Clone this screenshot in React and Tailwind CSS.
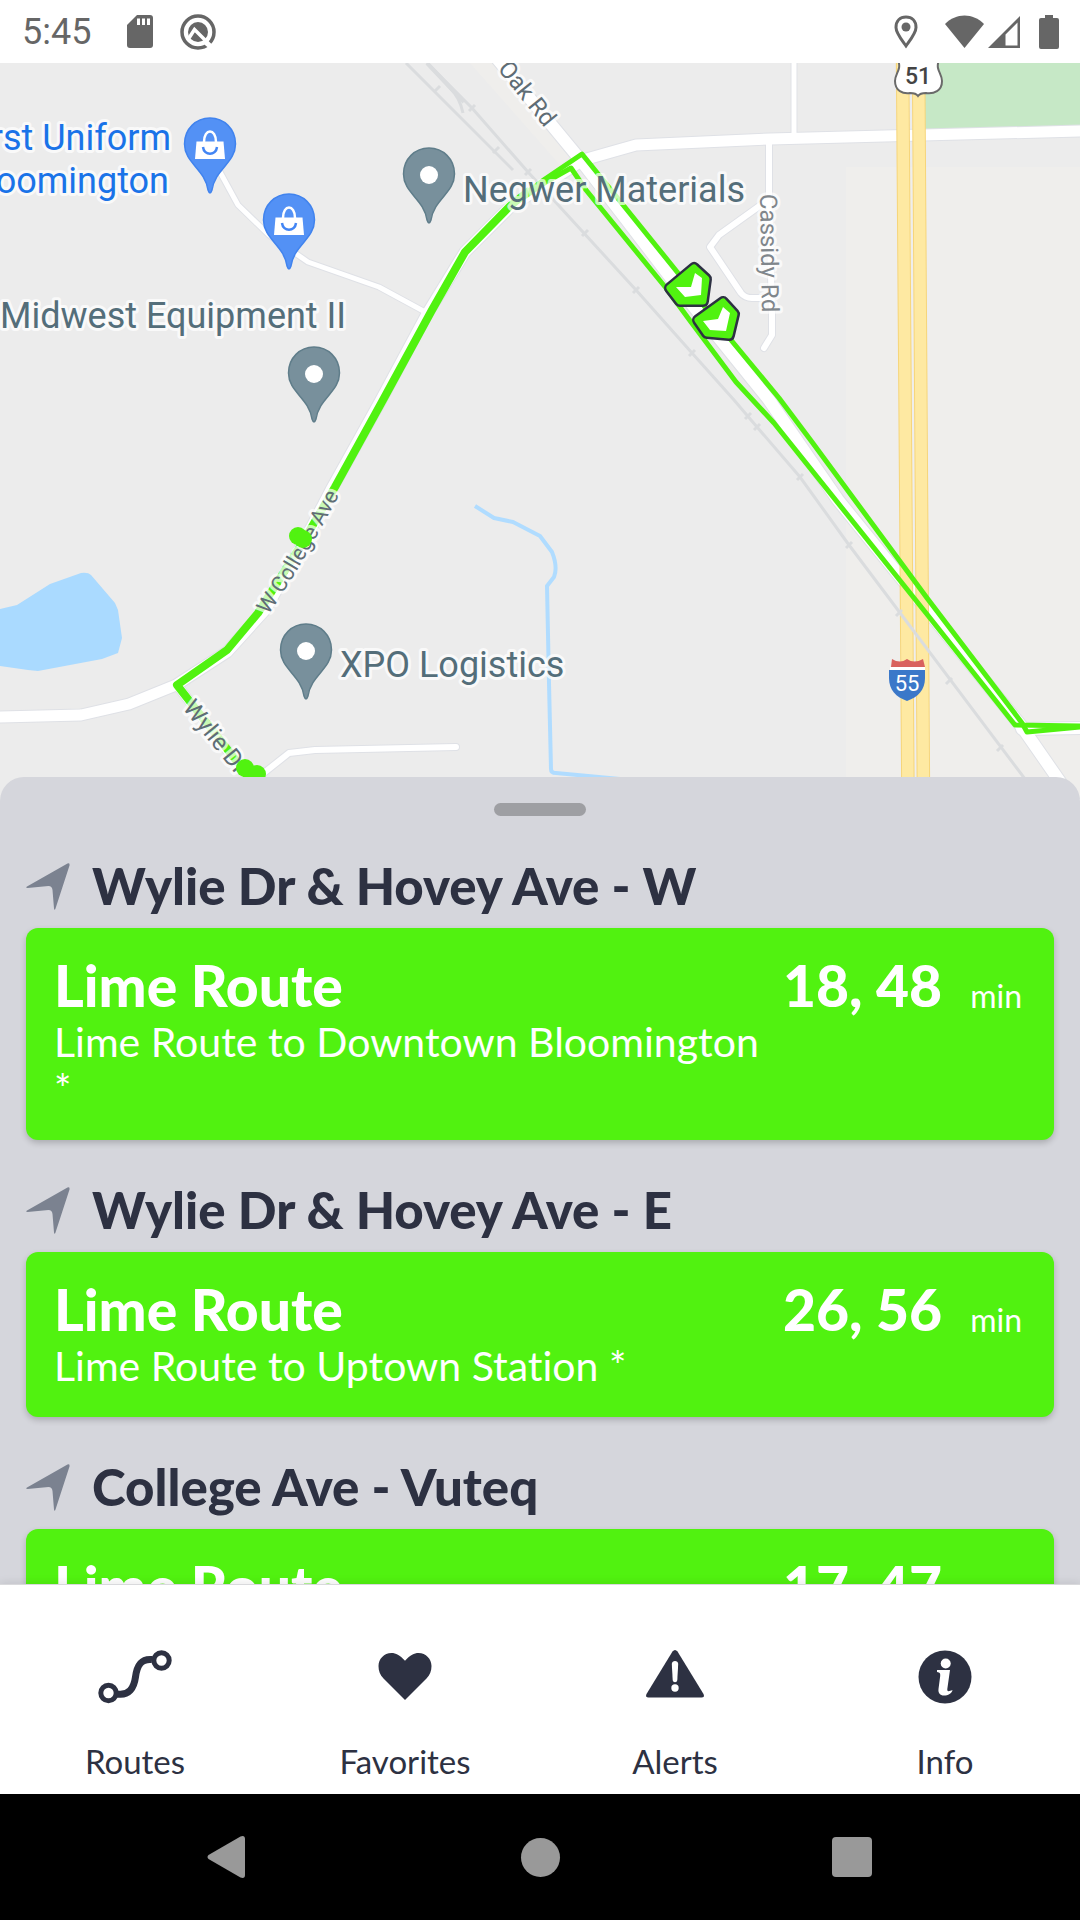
// Transit tracker home screen: live map, nearby arrivals sheet, tab bar

const LIME = '#51f210'
const INK = '#2d3142'

const stops = [
  {
    name: 'Wylie Dr & Hovey Ave - W',
    arrivals: [{ route: 'Lime Route', headsign: 'Lime Route to Downtown Bloomington *', times: '18, 48' }],
  },
  {
    name: 'Wylie Dr & Hovey Ave - E',
    arrivals: [{ route: 'Lime Route', headsign: 'Lime Route to Uptown Station *', times: '26, 56' }],
  },
  {
    name: 'College Ave - Vuteq',
    arrivals: [{ route: 'Lime Route', headsign: 'Lime Route to Uptown Station *', times: '17, 47' }],
  },
]

const tabs = [
  { label: 'Routes', icon: RoutesIcon },
  { label: 'Favorites', icon: HeartIcon },
  { label: 'Alerts', icon: AlertIcon },
  { label: 'Info', icon: InfoIcon },
]

// ── Map data ────────────────────────────────────────────────

const roads = [
  { d: 'M794 50V138', w: 5 },
  { d: 'M769 140V196L772 313V335L764 348', w: 6 },
  { d: 'M765 202L719 235L710 247L741 293Q745 298 752 298H766', w: 6 },
  { d: 'M220 172L238 205L269 235L308 262L379 287L427 313', w: 5 },
  { d: 'M255 780L289 753L315 750L456 747', w: 6 },
  { d: 'M177 685L250 780', w: 9 },
  { d: 'M0 717L81 715L129 704L176 685L227 652L265 610L305 540L331 490L381 400L427 314L465 252L510 207L583 160L636 145L770 139L1080 131', w: 11 },
  { d: 'M490 50L550 123L583 163L678 287L769 400L838 500L1022 727L1090 825', w: 12 },
  { d: 'M1022 729L1080 728', w: 12 },
]

const railTicks = [
  [437, 89], [472, 108], [496, 150], [528, 172], [585, 233], [636, 290], [692, 353],
  [748, 416], [757, 427], [800, 477], [849, 545], [899, 613], [949, 681], [1000, 748],
]

const pins = [
  { x: 210, y: 117, shop: true },
  { x: 289, y: 193, shop: true },
  { x: 429, y: 147 },
  { x: 314, y: 346 },
  { x: 306, y: 623 },
]

const buses = [
  {
    body: '694,268 706,279 703,301 680,301 670,288',
    arrow: '695,273 702,278 701,295 685,297 676,287 691,287',
  },
  {
    body: '723,302 734,314 729,335 707,333 698,320',
    arrow: '723,307 730,313 726,331 710,330 703,321 718,319',
  },
]

function Pin({ x, y, shop }) {
  return (
    <g transform={`translate(${x} ${y})`}>
      <path
        d="M0 1C14 1 25.500 12 25.500 27C25.500 46 5 52 2 73Q0 79 -2 73C-5 52 -25.500 46 -25.500 27C-25.500 12 -14 1 0 1Z"
        fill={shop ? '#5391f5' : '#78909c'}
        stroke={shop ? '#4083ee' : '#5f7d8a'}
        strokeWidth="1.500"
      />
      {shop ? (
        <g fill="none">
          <path d="M-13.500 24.500H13.500L15 42H-15Z" fill="#fff" />
          <path d="M-6 25C-6 11 6 11 6 25" stroke="#fff" strokeWidth="2.500" />
          <path d="M-7 30C-6 39 6 39 7 30" stroke="#4285f4" strokeWidth="2.500" />
        </g>
      ) : (
        <circle cy="28" r="9" fill="#fff" />
      )}
    </g>
  )
}

function TransitMap() {
  return (
    <svg
      viewBox="0 63 1080 738"
      preserveAspectRatio="xMidYMin slice"
      className="block h-full w-full font-[Roboto,sans-serif]"
      role="img"
      aria-label="Map of nearby routes"
    >
      <rect y="63" width="1080" height="738" fill="#ececec" />
      <path d="M846 167H1080V801H846Z M470 63H500L572 155L560 165Z" fill="#efeeec" />
      <path d="M924 63H1080V131H924Z" fill="#c6e8c6" />
      <path
        d="M0 609L17 605L50 584L81 573Q88 572 91 575L115 603L118 610L122 638L118 653L102 659L38 671L28 670L0 666Z"
        fill="#aadaff"
      />
      <path
        d="M475 506L494 518L513 522L540 536L552 552Q558 567 554 577L547 586L549 683L551 769Q551 773 556 773L620 779"
        fill="none"
        stroke="#b0dcff"
        strokeWidth="4"
        strokeLinejoin="round"
      />

      {/* roads: casing first, then surface */}
      <g fill="none" strokeLinejoin="round" strokeLinecap="round">
        {roads.map(r => <path key={r.d} d={r.d} stroke="#dfe1e6" strokeWidth={r.w + 2} />)}
        {roads.map(r => <path key={r.d} d={r.d} stroke="#fff" strokeWidth={r.w} />)}
      </g>

      {/* interstate */}
      <g fill="none">
        <path d="M902.500 50L908 801M918.500 50L923.500 801" stroke="#f6d57a" strokeWidth="13.500" />
        <path d="M902.500 50L908 801M918.500 50L923.500 801" stroke="#fee9a2" strokeWidth="11.500" />
      </g>

      {/* railway */}
      <g fill="none" stroke="#dadcde" strokeWidth="3">
        <path d="M406 63L513 170" />
        <path d="M427 63L450 88Q460 98 463 113M427 63L472 108L528 172L636 290L692 353L734 400L757 427L800 477L849 545L1040 799" />
        <path d="M427 63L464 102" strokeWidth="4" />
        {railTicks.map(([x, y]) => <path key={x} d={`M${x - 3} ${y + 3}L${x + 3} ${y - 3}`} />)}
      </g>

      {pins.map(p => <Pin key={`${p.x}-${p.y}`} {...p} />)}

      {/* route line */}
      <g fill="none" stroke={LIME} strokeLinejoin="round">
        <path d="M250 780L238 763L177 685L227 650L258 613L303 542L335 487L383 400L432 310L465 252L510 206L530 190" strokeWidth="8" />
        <path d="M510 205L545 179L582 154L678 273L731 340L779 398L812 442L927 598L1022 723L1027 732L1080 727" strokeWidth="5" />
        <path d="M520 200L546 182L571 168L586 190L666 288L691 322L736 382L774 423L926 613L1015 725L1080 726" strokeWidth="5" />
      </g>

      {/* labels */}
      <defs>
        <path id="college-ave" d="M268 615Q300 570 346 482" />
      </defs>
      <g fill="#546e7a" stroke="#fff" strokeOpacity="0.7" strokeWidth="6" strokeLinejoin="round" paintOrder="stroke" fontSize="36">
        <text x="171" y="150" textAnchor="end" fill="#1a73e8">First Uniform</text>
        <text x="169" y="193" textAnchor="end" fill="#1a73e8">Bloomington</text>
        <text x="0" y="328">Midwest Equipment II</text>
        <text x="463" y="202">Negwer Materials</text>
        <text x="340" y="677">XPO Logistics</text>
        <g fontSize="24" fill="#5f6d75">
          <text transform="translate(497 69) rotate(51)">Oak Rd</text>
          <text transform="translate(182 708) rotate(51)">Wylie Dr</text>
          <text fontSize="22"><textPath href="#college-ave">W College Ave</textPath></text>
          <text transform="translate(760 194) rotate(89)" fill="#80868b">Cassidy Rd</text>
        </g>
      </g>

      {/* stops */}
      <g fill={LIME}>
        <circle cx="298" cy="536" r="9" />
        <circle cx="303" cy="539" r="9" />
        <circle cx="245" cy="768" r="9" />
        <circle cx="257" cy="774" r="9" />
      </g>

      {/* buses */}
      {buses.map(b => (
        <g key={b.body} strokeLinejoin="round">
          <polygon points={b.body} fill={INK} stroke={INK} strokeWidth="12" />
          <polygon points={b.body} fill={LIME} stroke={LIME} strokeWidth="7" />
          <polygon points={b.arrow} fill="#fff" />
        </g>
      ))}

      {/* highway shields */}
      <path
        d="M898 60C902 70 895 73 895 81C895 91 903 94 910 93Q916 93 918 96Q920 93 926 93C934 94 942 91 942 81C942 73 935 70 939 60Z"
        fill="#fff"
        stroke="#6a6a6a"
        strokeWidth="2"
      />
      <text x="918" y="84" textAnchor="middle" fontSize="23" fontWeight="500" fill="#444">51</text>
      <path d="M891 667L892 659Q900 664 907 659Q914 664 923 659L925 667Z" fill="#d9625e" />
      <path d="M890 667H925V670H890Z" fill="#fff" />
      <path d="M889 670H925V678C925 690 918 697 907 701C896 697 889 690 889 678Z" fill="#3b78c9" />
      <text x="907" y="691" textAnchor="middle" fontSize="22" fill="#fff">55</text>
    </svg>
  )
}

// ── Icons ───────────────────────────────────────────────────

function RoutesIcon() {
  return (
    <svg viewBox="0 0 80 60" className="h-[60px] w-20" fill="none" stroke="currentColor" aria-hidden="true">
      <path d="M22 47C34 49 39 41 40.500 30C42 18 46 11.500 57 12.500" strokeWidth="7" />
      <circle cx="13.500" cy="46" r="7.700" strokeWidth="5" />
      <circle cx="66.500" cy="13.500" r="7.700" strokeWidth="5" />
    </svg>
  )
}

function HeartIcon() {
  return (
    <svg viewBox="0 0 60 60" className="size-[60px]" fill="currentColor" aria-hidden="true">
      <path d="M30 53L8.500 31.500C5 28 3.500 24 3.500 19C3.500 12 9 6 16.500 6C21 6 24.500 8 30 13.700C35.500 8 39 6 43.500 6C51 6 56.500 12 56.500 19C56.500 24 55 28 51.500 31.500Z" />
    </svg>
  )
}

function AlertIcon() {
  return (
    <svg viewBox="0 0 60 60" className="size-[60px]" fill="currentColor" aria-hidden="true">
      <path d="M27.500 4.500Q30 1.500 32.500 4.500L58.500 47Q60 50.500 56.500 50.500H3.500Q0 50.500 1.500 47Z" />
      <path d="M26.800 17C26.800 13 33.200 13 33.200 17L32.300 33C32 36 28 36 27.700 33Z" fill="#fff" />
      <circle cx="30" cy="41" r="3.700" fill="#fff" />
    </svg>
  )
}

function InfoIcon() {
  return (
    <svg viewBox="0 0 60 60" className="size-[60px]" fill="currentColor" aria-hidden="true">
      <circle cx="30" cy="30" r="26.500" />
      <g fill="#fff">
        <circle cx="30.700" cy="16.500" r="5" />
        <path d="M22 23H35L32.300 42C32 45 34 44.500 37.500 43C37 46.500 33 48.500 29 48.500C25 48.500 23 46 23.500 42L25.200 29C25.500 26.500 25 25.500 22 25Z" />
      </g>
    </svg>
  )
}

function DirectionIcon() {
  return (
    <svg viewBox="0 0 44 47" className="h-[47px] w-11 shrink-0" fill="#7b8290" aria-hidden="true">
      <path d="M41.500 0.500Q44 -0.300 43.500 2.500L29.500 45.500Q28.500 48 28 45.500L26.500 27Q26 23 22.500 23L1.500 25Q-0.800 24.500 1 23.500Z" />
    </svg>
  )
}

// ── Screen parts ────────────────────────────────────────────

function StatusBar() {
  return (
    <header className="flex h-[63px] shrink-0 items-center bg-white pr-5 pl-[22px] font-[Roboto,sans-serif] text-[#666]">
      <span className="text-4xl">5:45</span>
      <svg viewBox="0 0 26 33" className="ml-9 h-[33px] w-[26px]" fill="currentColor" aria-hidden="true">
        <path d="M10 0H23Q26 0 26 3V30Q26 33 23 33H3Q0 33 0 30V10Z" />
        <path d="M10 3.500H13V10H10ZM15 3.500H18V10H15ZM20 3.500H23V10H20Z" fill="#fff" />
      </svg>
      <svg viewBox="0 0 36 36" className="ml-[27px] size-9" fill="none" stroke="currentColor" aria-hidden="true">
        <circle cx="18" cy="18" r="16" strokeWidth="3.500" />
        <circle cx="18" cy="18" r="10" fill="currentColor" stroke="none" />
        <path d="M9 24L14.500 15.500L31 32" stroke="#fff" strokeWidth="3.500" />
        <path d="M25 29L31 34" stroke="#fff" strokeWidth="3" />
      </svg>

      <svg viewBox="0 0 24 34" className="ml-auto h-[34px] w-6" fill="none" stroke="currentColor" aria-hidden="true">
        <path d="M12 31C7 24 2 18 2 12.500C2 6 6 2 12 2C18 2 22 6 22 12.500C22 18 17 24 12 31Z" strokeWidth="3" />
        <circle cx="12" cy="12" r="4.500" fill="currentColor" stroke="none" />
      </svg>
      <svg viewBox="0 0 39 33" className="ml-[27px] h-[33px] w-[39px]" fill="currentColor" aria-hidden="true">
        <path d="M0 9C11 -2.500 28 -2.500 39 9L19.500 33Z" />
      </svg>
      <svg viewBox="0 0 32 32" className="ml-1 size-8" fill="currentColor" aria-hidden="true">
        <path d="M32 0V32H0ZM29.500 6.500L17.500 18.500V29.500H29.500Z" fillRule="evenodd" />
      </svg>
      <svg viewBox="0 0 20 34" className="mr-px ml-[19px] h-[34px] w-5" fill="currentColor" aria-hidden="true">
        <path d="M6 0H14V3H18Q20 3 20 5V32Q20 34 18 34H2Q0 34 0 32V5Q0 3 2 3H6Z" />
      </svg>
    </header>
  )
}

function ArrivalCard({ route, headsign, times }) {
  return (
    <button
      type="button"
      className="flex w-full items-start rounded-xl bg-[#51f210] pt-6 pr-8 pb-7 pl-7 text-left text-white shadow-[0_3px_6px_rgba(0,0,0,0.2)]"
    >
      <span className="min-w-0 flex-1">
        <span className="block text-[57px] leading-[66px] font-black">{route}</span>
        <span className="block text-[41px] leading-[47px]">{headsign}</span>
      </span>
      <span className="ml-4 flex shrink-0 items-end gap-7">
        <span className="text-[57px] leading-[66px] font-black">{times}</span>
        <span className="text-[32px] leading-[44px]">min</span>
      </span>
    </button>
  )
}

function StopSection({ stop }) {
  return (
    <section className="pt-[46px]">
      <div className="mb-[18px] flex h-12 items-center gap-[22px]">
        <DirectionIcon />
        <h2 className="text-[51px] leading-[48px] font-black text-[#2d3142]">{stop.name}</h2>
      </div>
      {stop.arrivals.map(a => <ArrivalCard key={a.headsign} {...a} />)}
    </section>
  )
}

function TabBar() {
  return (
    <nav className="relative grid h-[210px] shrink-0 grid-cols-4 border-t border-[#d9d9dc] bg-white shadow-[0_-2px_8px_rgba(0,0,0,0.08)]">
      {tabs.map(({ label, icon: Icon }) => (
        <button key={label} type="button" className="flex flex-col items-center pt-[62px] text-[#2d3142]">
          <Icon />
          <span className="mt-[34px] text-[33px] leading-10">{label}</span>
        </button>
      ))}
    </nav>
  )
}

function SystemNav() {
  return (
    <div className="grid h-[126px] shrink-0 grid-cols-3 bg-black px-[72px]">
      <button type="button" aria-label="Back" className="flex items-center justify-center">
        <svg viewBox="0 0 38 42" className="mr-1 h-[42px] w-[38px]" fill="#999" aria-hidden="true">
          <path d="M33.500 0.500Q38 -1 38 3V39Q38 43 33.500 41.500L1.500 23Q-0.500 21 1.500 19Z" />
        </svg>
      </button>
      <button type="button" aria-label="Home" className="flex items-center justify-center">
        <span className="size-[39px] rounded-full bg-[#999]" />
      </button>
      <button type="button" aria-label="Recent apps" className="flex items-center justify-center">
        <span className="size-10 rounded bg-[#999]" />
      </button>
    </div>
  )
}

export default function App() {
  return (
    <div className="flex h-screen flex-col overflow-hidden bg-white font-[Lato,sans-serif] [font-variant-ligatures:none]">
      <StatusBar />
      <div className="h-[738px] shrink-0">
        <TransitMap />
      </div>
      <main className="relative -mt-6 min-h-0 flex-1 overflow-hidden rounded-t-3xl bg-[#d5d6dc] px-[26px] pt-[26px]">
        <div className="mx-auto h-[13px] w-[92px] rounded-full bg-[#9e9fa3]" />
        {stops.map(s => <StopSection key={s.name} stop={s} />)}
      </main>
      <TabBar />
      <SystemNav />
    </div>
  )
}
